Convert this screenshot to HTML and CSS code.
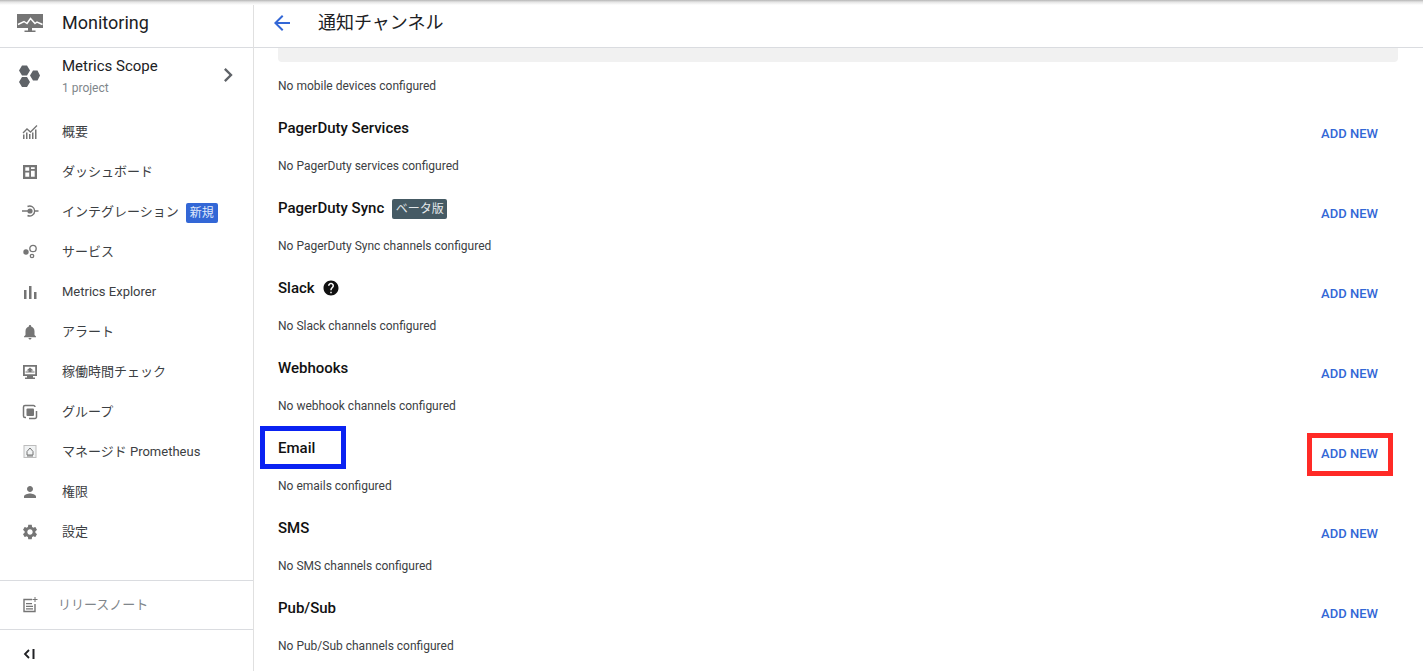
FILE: index.html
```html
<!DOCTYPE html>
<html lang="ja">
<head>
<meta charset="utf-8">
<title>通知チャンネル</title>
<link rel="stylesheet" href="styles.css">
</head>
<body>
<div class="top-shade"></div>
<aside class="sidebar">
  <div class="brand">
    <svg class="brand-logo" viewBox="0 0 26 18"><path fill="#757575" d="M0 0h26v14H0z"/><path fill="#757575" d="M11 14h4v2.500h-4zM7.500 16.500h11V18h-11z"/><path fill="none" stroke="#fff" stroke-width="1.500" d="M1 10.500l6-3 3 2 3.500-5 4.500 5 2-1.500 5.500 2.500"/></svg>
    <span class="brand-name">Monitoring</span>
  </div>
  <div class="scope">
    <svg class="scope-logo" viewBox="0 0 22 24"><path fill="#5f6368" d="M1 5.500L4 .5h5l3 5-3 5H4zM12 10.500l3-5h4.500l2.500 5-2.500 5H15zM1 17l3-5h5l3 5-3 5H4z"/></svg>
    <div class="scope-text">
      <div class="scope-name">Metrics Scope</div>
      <div class="scope-sub">1 project</div>
    </div>
    <svg class="chevron" viewBox="0 0 24 24"><path fill="#5f6368" d="M10 6L8.590 7.410 13.170 12l-4.580 4.590L10 18l6-6z"/></svg>
  </div>
  <nav class="nav">
    <a class="nav-item"><svg class="nav-icon" viewBox="0 0 18 18"><path fill="#757575" d="M2 11.500h1.500V16H2zM5 9.500h1.500V16H5zM8 11h1.500v5H8zM11 9.500h1.500V16H11zM14 6.500h1.500V16H14z"/><path fill="none" stroke="#757575" stroke-width="1.300" d="M2 10l4-4 3.500 3L16 2.500"/></svg><span class="label-cjk">概要</span></a>
    <a class="nav-item"><svg class="nav-icon" viewBox="0 0 18 18"><path fill="#757575" fill-rule="evenodd" d="M2 2h14v14H2zM4.300 4.300v3.400h3.900V4.300zM10 4.300v1.700h3.700V4.300zM10 7.800v5.900h3.700V7.800zM4.300 9.500v4.200h3.900V9.500z"/></svg><span class="label-cjk">ダッシュボード</span></a>
    <a class="nav-item"><svg class="nav-icon" viewBox="0 0 18 18"><circle cx="9" cy="8" r="2.600" fill="#757575"/><path fill="none" stroke="#757575" stroke-width="1.400" d="M6.500 3.500a5 5 0 1 1 0 9M1 8h6M14 8h3.500"/></svg><span class="label-cjk">インテグレーション</span><span class="badge-new">新規</span></a>
    <a class="nav-item"><svg class="nav-icon" viewBox="0 0 18 18"><circle cx="5" cy="9" r="2.700" fill="#757575"/><circle cx="12" cy="5.500" r="3.200" fill="none" stroke="#757575" stroke-width="1.300"/><circle cx="11" cy="13" r="1.700" fill="none" stroke="#757575" stroke-width="1.300"/></svg><span class="label-cjk">サービス</span></a>
    <a class="nav-item"><svg class="nav-icon" viewBox="0 0 18 18"><path fill="#757575" d="M3 7h2.500v9H3zM8 3h2.500v13H8zM13 9h2.500v7H13z"/></svg><span>Metrics Explorer</span></a>
    <a class="nav-item"><svg class="nav-icon" viewBox="0 0 24 24"><path fill="#757575" d="M12 22c1.100 0 2-.9 2-2h-4c0 1.100.9 2 2 2zm6-6v-5c0-3.070-1.630-5.640-4.500-6.320V4c0-.83-.67-1.500-1.500-1.500s-1.500.67-1.500 1.500v.68C7.640 5.360 6 7.920 6 11v5l-2 2v1h16v-1l-2-2z"/></svg><span class="label-cjk">アラート</span></a>
    <a class="nav-item"><svg class="nav-icon" viewBox="0 0 18 18"><path fill="#757575" fill-rule="evenodd" d="M2 2h14v11H2zM3.800 3.800v7.400h10.400V3.800zM6 13h6v1.500h2V16H4v-1.500h2z"/><path fill="#757575" d="M9 4.500l3.500 3H10.500v2h-3v-2H5.500zM4.500 8.500h9v1h-9z"/></svg><span class="label-cjk">稼働時間チェック</span></a>
    <a class="nav-item"><svg class="nav-icon" viewBox="0 0 18 18"><rect x="5.500" y="5.500" width="7.500" height="7.500" rx="1" fill="#757575"/><path fill="none" stroke="#757575" stroke-width="1.500" d="M5 14.500H4a1.500 1.500 0 0 1-1.500-1.500V4A1.500 1.500 0 0 1 4 2.500h8.500A1.500 1.500 0 0 1 14 4M8 15.500h6a1.500 1.500 0 0 0 1.500-1.500V8"/></svg><span class="label-cjk">グループ</span></a>
    <a class="nav-item"><svg class="nav-icon" viewBox="0 0 18 18"><rect x="3" y="2.500" width="12" height="12" fill="#f1f3f4" stroke="#bdbdbd"/><path fill="none" stroke="#757575" d="M9 5l-3 3.500V12h6V8.500zM6 13h6"/></svg><span class="label-cjk">マネージド Prometheus</span></a>
    <a class="nav-item"><svg class="nav-icon" viewBox="0 0 24 24"><path fill="#757575" d="M12 12c2.210 0 4-1.790 4-4s-1.790-4-4-4-4 1.790-4 4 1.790 4 4 4zm0 2c-2.670 0-8 1.340-8 4v2h16v-2c0-2.660-5.330-4-8-4z"/></svg><span class="label-cjk">権限</span></a>
    <a class="nav-item"><svg class="nav-icon" viewBox="0 0 24 24"><path fill="#757575" d="M19.140 12.940c.04-.3.06-.61.06-.94 0-.32-.02-.64-.07-.94l2.030-1.580c.18-.14.23-.41.12-.61l-1.920-3.320c-.12-.22-.37-.29-.59-.22l-2.390.96c-.5-.38-1.030-.7-1.620-.94l-.36-2.540c-.04-.24-.24-.41-.48-.41h-3.840c-.24 0-.43.17-.47.41l-.36 2.540c-.59.24-1.130.57-1.620.94l-2.390-.96c-.22-.08-.47 0-.59.22L2.740 8.870c-.12.21-.08.47.12.61l2.030 1.580c-.05.3-.09.63-.09.94s.02.64.07.94l-2.030 1.580c-.18.14-.23.41-.12.61l1.920 3.320c.12.22.37.29.59.22l2.390-.96c.5.38 1.030.7 1.620.94l.36 2.540c.05.24.24.41.48.41h3.840c.24 0 .44-.17.47-.41l.36-2.540c.59-.24 1.130-.56 1.620-.94l2.390.96c.22.08.47 0 .59-.22l1.920-3.320c.12-.22.07-.47-.12-.61l-2.010-1.580zM12 15.600c-1.980 0-3.600-1.620-3.600-3.600s1.620-3.600 3.600-3.600 3.600 1.620 3.600 3.600-1.620 3.600-3.600 3.600z"/></svg><span class="label-cjk">設定</span></a>
  </nav>
  <div class="release">
    <svg class="nav-icon" viewBox="0 0 18 18"><path fill="none" stroke="#757575" stroke-width="1.400" d="M11 3.500H3v12h11V8"/><path fill="#757575" d="M5 7h6v1.300H5zM5 9.700h7v1.300H5zM5 12.300h7v1.300H5zM13.500 1h1v2h2v1h-2v2h-1V4h-2V3h2z"/></svg>
    <span class="release-label">リリースノート</span>
  </div>
  <div class="collapse">
    <svg class="collapse-icon" viewBox="0 0 12 10"><path fill="none" stroke="#202124" stroke-width="1.800" d="M6 1L2 5l4 4"/><path fill="#202124" d="M9.500 0h2v10h-2z"/></svg>
  </div>
</aside>
<main class="main">
  <header class="page-head">
    <svg class="back" viewBox="0 0 24 24"><path fill="#3367d6" d="M20 11H7.830l5.590-5.590L12 4l-8 8 8 8 1.410-1.410L7.830 13H20v-2z"/></svg>
    <h1 class="page-title">通知チャンネル</h1>
  </header>
  <div class="content">
    <div class="mobile-box"></div>
    <p class="desc first">No mobile devices configured</p>
    <section class="channel">
      <div class="channel-text"><h2 class="channel-title">PagerDuty Services</h2><p class="desc">No PagerDuty services configured</p></div>
      <button class="add">ADD NEW</button>
    </section>
    <section class="channel">
      <div class="channel-text"><h2 class="channel-title">PagerDuty Sync<span class="badge-beta">ベータ版</span></h2><p class="desc">No PagerDuty Sync channels configured</p></div>
      <button class="add">ADD NEW</button>
    </section>
    <section class="channel">
      <div class="channel-text"><h2 class="channel-title">Slack<svg class="help" viewBox="0 0 24 24"><path fill="#111" d="M12 2C6.480 2 2 6.480 2 12s4.480 10 10 10 10-4.480 10-10S17.520 2 12 2zm1 17h-2v-2h2v2zm2.070-7.750l-.9.920C13.450 12.900 13 13.500 13 15h-2v-.5c0-1.100.45-2.100 1.170-2.830l1.240-1.260c.37-.36.59-.86.59-1.410 0-1.100-.9-2-2-2s-2 .9-2 2H8c0-2.210 1.790-4 4-4s4 1.790 4 4c0 .88-.36 1.680-.93 2.250z"/></svg></h2><p class="desc">No Slack channels configured</p></div>
      <button class="add">ADD NEW</button>
    </section>
    <section class="channel">
      <div class="channel-text"><h2 class="channel-title">Webhooks</h2><p class="desc">No webhook channels configured</p></div>
      <button class="add">ADD NEW</button>
    </section>
    <section class="channel">
      <div class="channel-text"><h2 class="channel-title">Email</h2><p class="desc">No emails configured</p></div>
      <button class="add">ADD NEW</button>
      <div class="mark mark-blue"></div>
      <div class="mark mark-red"></div>
    </section>
    <section class="channel">
      <div class="channel-text"><h2 class="channel-title">SMS</h2><p class="desc">No SMS channels configured</p></div>
      <button class="add">ADD NEW</button>
    </section>
    <section class="channel">
      <div class="channel-text"><h2 class="channel-title">Pub/Sub</h2><p class="desc">No Pub/Sub channels configured</p></div>
      <button class="add">ADD NEW</button>
    </section>
  </div>
</main>
</body>
</html>
```
FILE: styles.css
```css
* { box-sizing: border-box; }
html, body { margin: 0; height: 671px; overflow: hidden; }
body {
  display: flex;
  background: #fff;
  color: #202124;
  font-family: Roboto, "Noto Sans CJK JP", sans-serif;
}
.top-shade {
  position: absolute;
  top: 0; left: 0; right: 0;
  height: 5px;
  background: linear-gradient(#b5b5b5, #e4e4e4 40%, #fff);
}
.sidebar {
  width: 254px;
  flex: none;
  height: 671px;
  border-right: 1px solid #e0e0e0;
  display: flex;
  flex-direction: column;
}
.brand {
  height: 48px;
  flex: none;
  display: flex;
  align-items: center;
  padding: 0 0 2px 17px;
  border-bottom: 1px solid #dadce0;
}
.brand-logo { width: 26px; height: 18px; margin-right: 19px; }
.brand-name { font-size: 18px; color: #202124; }
.scope {
  height: 63px;
  flex: none;
  display: flex;
  align-items: center;
  padding: 0 0 6px 18px;
}
.scope-logo { width: 22px; height: 24px; margin-right: 22px; }
.scope-text { flex: 1; }
.scope-name { font-size: 15px; line-height: 20px; color: #202124; margin-bottom: 2px; }
.scope-sub { font-size: 12px; line-height: 20px; color: #80868b; }
.chevron { width: 28px; height: 28px; margin: 0 11px 4px 0; }
.nav { flex: 1; }
.nav-item {
  height: 40px;
  display: flex;
  align-items: center;
  padding-left: 21px;
  font-size: 13px;
  color: #3c4043;
}
.nav-icon { width: 18px; height: 18px; flex: none; margin: 2px 23px 0 0; }
.label-cjk { margin-top: -2px; }
.badge-new {
  margin: 4px 0 0 7px;
  width: 32px;
  height: 20px;
  line-height: 20px;
  text-align: center;
  font-size: 12px;
  background: #3367d6;
  color: #dfe7fb;
  border-radius: 2px;
}
.release {
  height: 49px;
  flex: none;
  display: flex;
  align-items: center;
  padding-left: 21px;
  border-top: 1px solid #dadce0;
  font-size: 13px;
  color: #80868b;
}
.release .nav-icon { margin: 0 19px 0 0; }
.release-label { margin-top: -4px; }
.collapse {
  height: 42px;
  flex: none;
  display: flex;
  align-items: center;
  padding: 7px 0 0 23px;
  border-top: 1px solid #dadce0;
}
.collapse-icon { width: 12px; height: 10px; }
.main { flex: 1; min-width: 0; }
.page-head {
  height: 48px;
  display: flex;
  align-items: center;
  padding-left: 16px;
  border-bottom: 1px solid #dadce0;
}
.back { width: 24px; height: 24px; margin: 0 24px 2px 0; }
.page-title { margin: 0 0 6px; font-size: 18px; font-weight: 400; color: #202124; }
.content { padding: 0 25px 0 24px; }
.mobile-box {
  height: 14px;
  background: #f1f1f1;
  border-radius: 0 0 4px 4px;
}
.desc { margin: 0; font-size: 12px; line-height: 20px; color: #3c4043; }
.first { margin: 14px 0 10px; }
.channel {
  position: relative;
  height: 80px;
  display: flex;
  justify-content: space-between;
  align-items: flex-start;
}
.channel-text { padding-top: 12px; }
.channel-title {
  display: flex;
  align-items: center;
  height: 20px;
  margin: 0 0 18px;
  font-size: 15px;
  font-weight: 500;
  color: #111;
}
.add {
  margin-top: 9px;
  width: 97px;
  height: 36px;
  padding: 0;
  border: 0;
  background: none;
  font-family: inherit;
  font-size: 13px;
  font-weight: 500;
  color: #3367d6;
}
.badge-beta {
  margin: 2px 0 0 8px;
  width: 55px;
  height: 20px;
  line-height: 20px;
  text-align: center;
  font-size: 12px;
  font-weight: 400;
  background: #455a64;
  color: #e3e8ea;
  border-radius: 2px;
}
.help { width: 18px; height: 18px; margin-left: 7px; }
.mark { position: absolute; border-style: solid; border-width: 5px; }
.mark-blue { left: -18px; top: 0; width: 86px; height: 43px; border-color: #0a22f2; }
.mark-red { right: 5px; top: 7px; width: 86px; height: 43px; border-color: #ff2a26; }
```
